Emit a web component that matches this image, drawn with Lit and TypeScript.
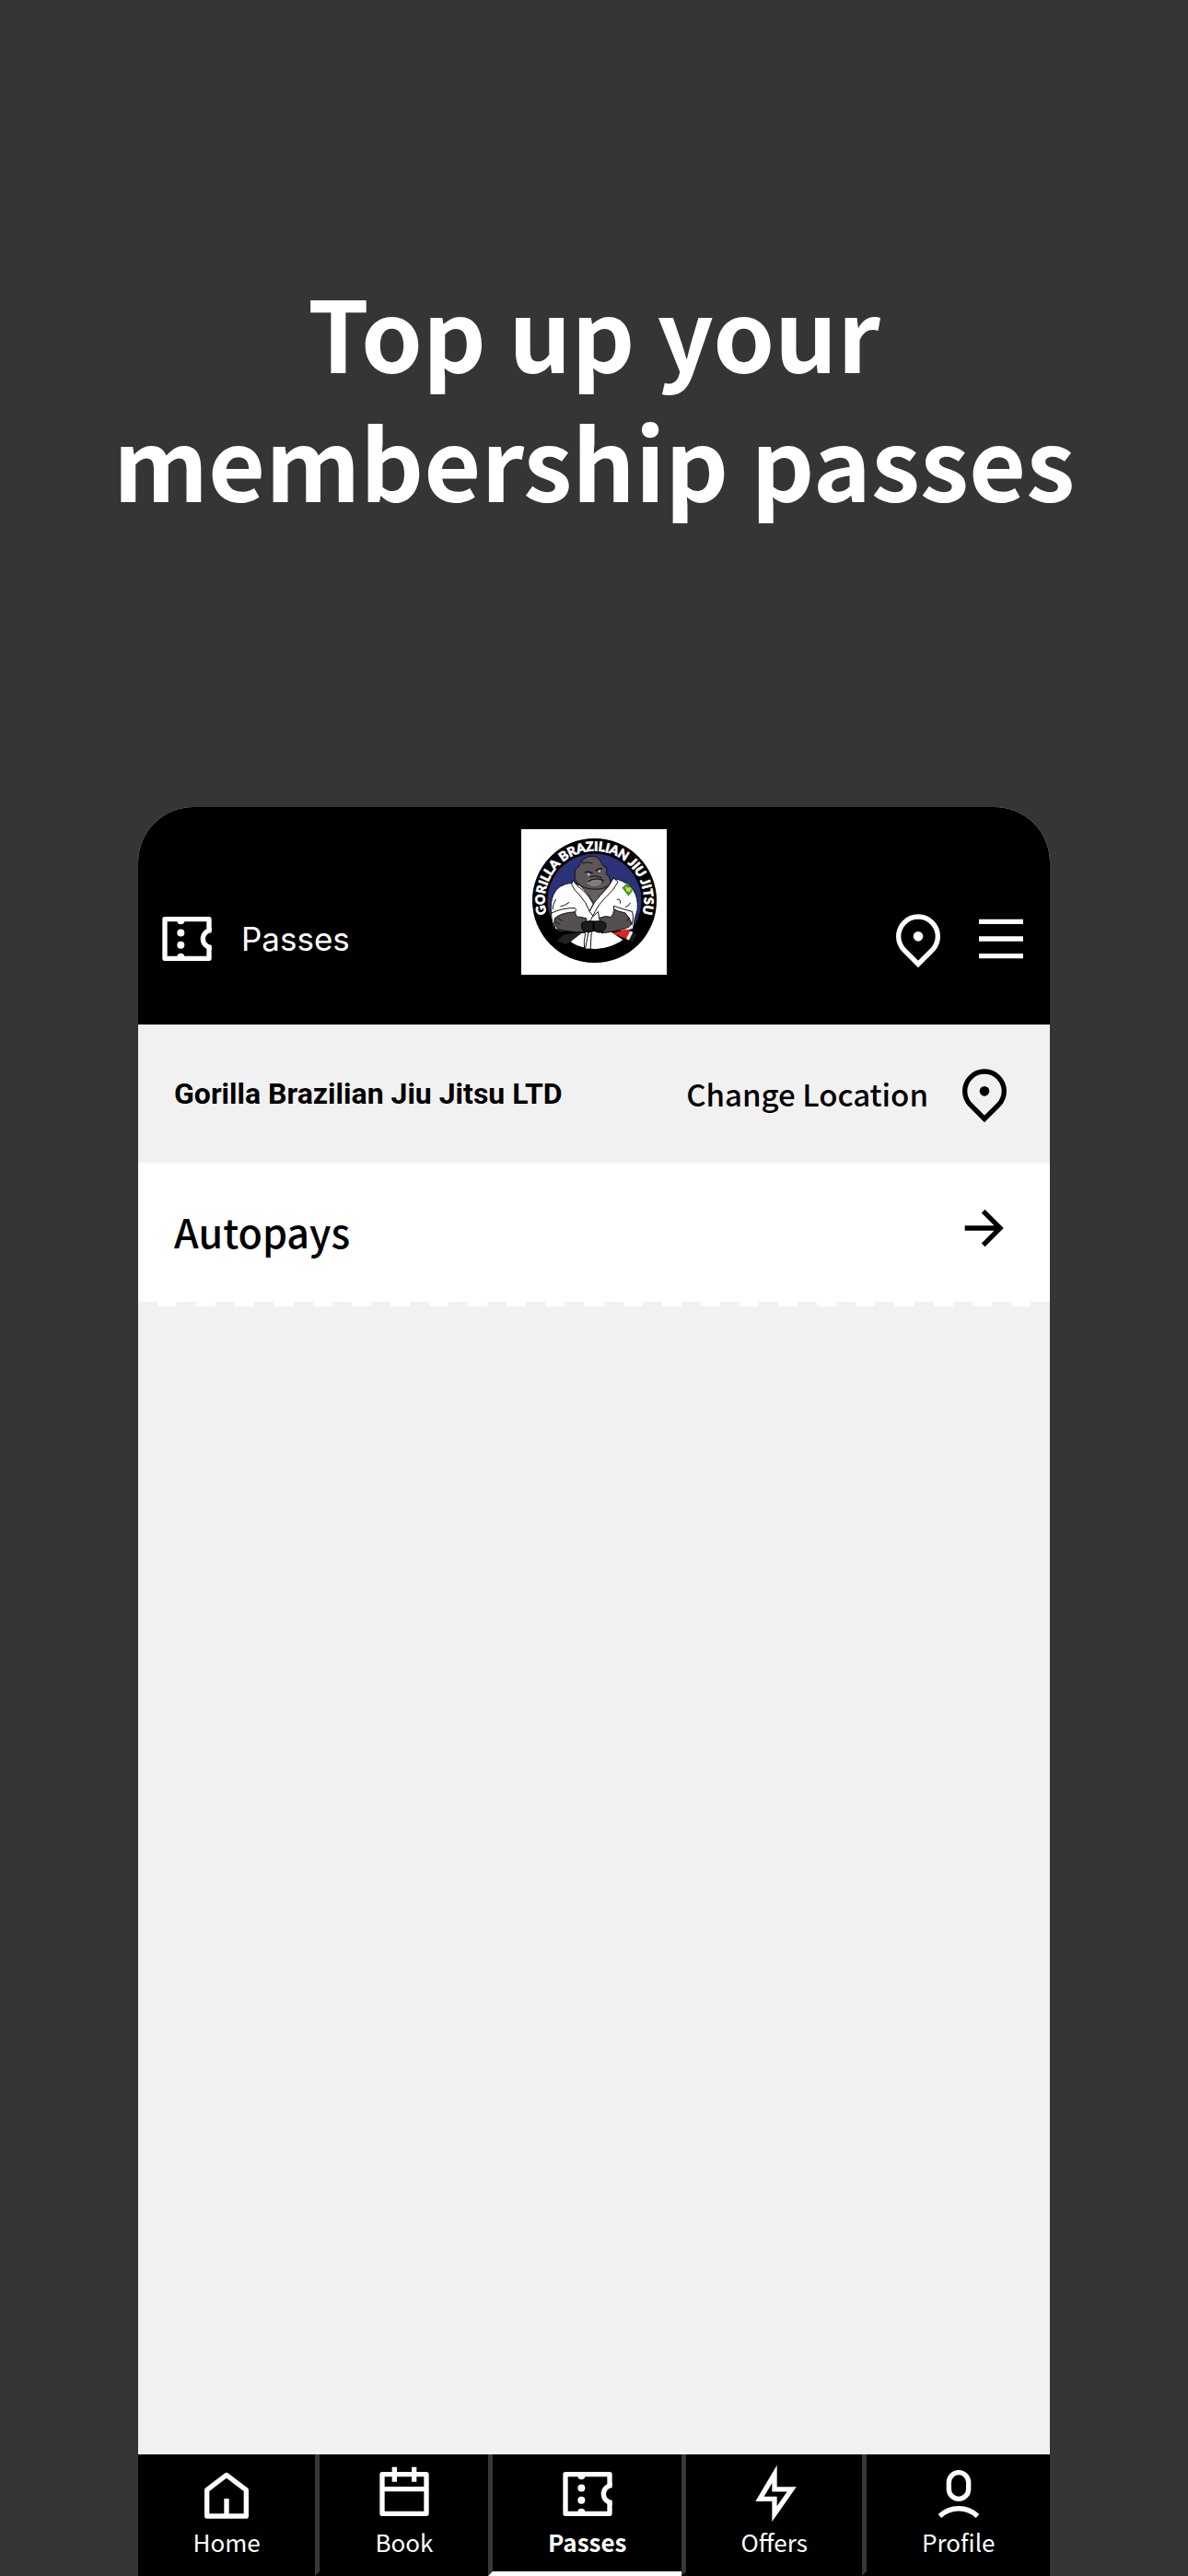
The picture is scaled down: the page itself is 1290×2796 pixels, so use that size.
import { LitElement, html, css, svg } from "lit";
import { customElement, property } from "lit/decorators.js";
import { classMap } from "lit/directives/class-map.js";

const icons = {
  ticket: svg`
    <path d="M21 8.65V4H3v16h18v-4.65" />
    <path d="M22 8.5a3.5 3.5 0 0 0 0 7" />
    <g fill="currentColor" stroke="none">
      <circle cx="9.5" cy="4.6" r="1.5" /><circle cx="9.5" cy="9.6" r="1.5" />
      <circle cx="9.5" cy="14.5" r="1.5" /><circle cx="9.5" cy="19.4" r="1.5" />
    </g>`,
  pin: svg`
    <path stroke-linejoin="miter" d="M6.34 16.66a8 8 0 1 1 11.32 0L12 22.3z" />
    <circle cx="12" cy="11" r="2" fill="currentColor" stroke="none" />`,
  menu: svg`<path d="M3 5h18M3 12h18M3 19h18" />`,
  arrow: svg`<path stroke-linejoin="miter" d="M4 12h14.4M11.5 5.1l6.9 6.9-6.9 6.9" />`,
  house: svg`<path d="M12 4.3L4 10.4V21h16V10.4zM12 13.9V21" />`,
  calendar: svg`<path d="M3 4h18v16H3zM3 10h18M8 1v6M16 1v6" />`,
  bolt: svg`<path stroke-linejoin="miter" stroke-miterlimit="10" d="M12 3.9v6.2h7l-7 10V14H6z" />`,
  person: svg`
    <rect x="8" y="3.25" width="8" height="10.75" rx="4" />
    <path d="M4.3 21a11.1 11.1 0 0 1 15.4 0" />`,
};

type IconName = keyof typeof icons;

@customElement("line-icon")
class LineIcon extends LitElement {
  static styles = css`
    :host {
      display: block;
      flex: none;
    }
    .glyph {
      display: block;
      width: 64px;
      height: 64px;
      fill: none;
      stroke: currentColor;
      stroke-width: 2;
      stroke-linejoin: round;
    }
  `;

  @property() name: IconName = "ticket";

  render() {
    return html`<svg class="glyph" viewBox="0 0 24 24" aria-hidden="true">${icons[this.name]}</svg>`;
  }
}

@customElement("club-logo")
class ClubLogo extends LitElement {
  static styles = css`
    :host {
      display: block;
    }
    .badge {
      display: block;
      width: 158px;
      height: 158px;
      background: #fff;
    }
    .ring-text {
      font: 900 42px Lato, sans-serif;
      fill: #fff;
      stroke: #fff;
      stroke-width: 2;
      text-anchor: middle;
    }
  `;

  render() {
    return html`
      <svg class="badge" viewBox="49 61 475 475" role="img" aria-label="Gorilla Brazilian Jiu Jitsu">
        <defs>
          <path id="ring" d="M288 456A162 162 0 1 1 288.1 456" />
          <clipPath id="disc"><circle cx="288" cy="294" r="158" /></clipPath>
        </defs>
        <circle cx="288" cy="294" r="203" fill="#000" />
        <circle cx="288" cy="294" r="153" fill="#2b3279" />
        <g clip-path="url(#disc)">
          <path fill="#000" d="M130 395H460V460H130z" />
          <path fill="#fff" d="M205 425L250 395H340L385 425Q335 452 292 452Q240 452 205 425z" />
        </g>
        <g stroke="#111" stroke-width="3" stroke-linejoin="round" stroke-linecap="round">
          <path fill="#fff" d="M216 236Q168 240 154 275Q143 300 147 335Q147 365 158 386Q185 395 250 392L330 392Q390 396 414 386Q416 360 428 325Q432 285 414 258Q395 234 362 224L345 235Q300 262 236 243z" />
          <path fill="#655f60" d="M236 240Q262 262 287 305Q318 262 338 238L290 226z" />
          <path fill="#5c5657" d="M246 166Q262 147 284 149Q304 151 313 176Q318 186 328 187Q330 198 326 206Q343 222 340 238Q322 258 290 257Q248 256 234 238Q222 226 224 204Q224 190 237 184Q238 174 246 166z" />
          <path fill="#fff" d="M218 229Q232 248 252 262Q270 278 284 305L272 329Q262 300 238 274Q222 262 214 242z" />
          <path fill="#fff" d="M350 221Q357 225 365 233Q350 262 322 286Q300 308 290 330L276 357L258 452H275L278 400L305 360L300 330L284 345L272 330Q284 300 308 276Q335 252 350 221z" />
          <path fill="#554f50" d="M162 350Q190 330 226 326Q222 350 244 348L262 352L262 368Q245 372 248 388L258 400Q205 395 172 388Q152 374 162 350z" />
          <path fill="#554f50" d="M352 318Q366 328 392 330Q412 345 408 372Q398 386 370 390Q340 398 310 400L322 384Q330 368 310 366L306 350Q325 342 340 348Q352 340 352 318z" />
          <path fill="#fff" d="M147 335Q180 318 224 318Q232 324 224 331Q180 333 158 352Q154 372 160 386Q147 364 147 335z" />
          <path fill="#fff" d="M352 312Q380 322 412 330Q418 348 410 372Q404 350 388 334Q364 330 352 322z" />
          <path fill="none" d="M248 172Q265 165 280 172M274 218Q290 208 312 220M268 236Q290 250 318 232M162 290Q150 310 152 322M205 300Q190 312 178 313M362 290Q375 288 372 302M390 315Q400 312 405 302M165 365l10 6M170 352l12 8M402 350l-8 10M258 403Q252 430 255 450" />
        </g>
        <path fill="#827b7c" d="M264 226Q284 214 306 224Q322 234 300 246Q276 250 264 238z" />
        <path fill="none" stroke="#111" stroke-width="4" d="M256 202Q270 196 282 205M292 197Q300 188 314 189M266 232Q288 216 318 228" />
        <g fill="#ddd"><circle cx="269" cy="209" r="3.5" /><circle cx="304" cy="198" r="3.5" /></g>
        <path fill="#1c1c1c" stroke="#000" stroke-width="3" d="M246 368Q262 358 286 362Q310 358 325 368Q328 386 314 396Q300 402 286 392Q268 402 254 394Q244 384 246 368z" />
        <path fill="#000" d="M282 360h6v34h-6z" />
        <path fill="#222" stroke="#000" stroke-width="2" d="M188 404L250 396L196 438L165 426z" />
        <path fill="#e2231a" d="M345 400L398 388L408 396L396 420z" />
        <path fill="#fff" d="M404 394L414 397L402 424L392 419z" />
        <path fill="#1a1a1a" d="M414 397L427 404L412 430L400 424z" />
        <path fill="#2f9e35" d="M378 252L396 236L413 262L399 280z" />
        <path fill="#f2d21f" d="M388 248L398 252L408 250L404 266L393 264z" />
        <text class="ring-text"><textPath href="#ring" startOffset="50%">GORILLA BRAZILIAN JIU JITSU</textPath></text>
      </svg>
    `;
  }
}

interface Tab {
  label: string;
  icon: IconName;
  active?: boolean;
}

@customElement("app-root")
class AppRoot extends LitElement {
  static styles = css`
    :host {
      display: block;
      font-family: "Noto Sans CJK JP", "Noto Sans", sans-serif;
      color: #000;
    }
    .page {
      display: flex;
      flex-direction: column;
      min-height: 100vh;
      background: #353535;
    }
    .headline {
      margin: 0;
      padding: 289px 100px 307px;
      font-size: 107px;
      line-height: 140px;
      font-weight: 700;
      color: #fff;
      text-align: center;
    }
    .phone {
      flex: 1;
      display: flex;
      flex-direction: column;
      margin: 0 150px;
      background: #f1f1f1;
      border-radius: 60px 60px 0 0;
      overflow: hidden;
    }
    .topbar {
      display: grid;
      grid-template-columns: 1fr auto 1fr;
      align-items: start;
      padding: 24px 21px 54px;
      background: #000;
      color: #fff;
    }
    .section,
    .actions {
      display: flex;
      align-items: center;
      padding-top: 87px;
    }
    .section {
      gap: 27px;
    }
    .actions {
      justify-content: flex-end;
      gap: 26px;
    }
    .section-name {
      margin: 0;
      font: 400 35px/64px Inter, sans-serif;
    }
    .plain {
      display: flex;
      align-items: center;
      margin: 0;
      padding: 0;
      border: 0;
      background: none;
      color: inherit;
      font: inherit;
      cursor: pointer;
    }
    .location {
      display: flex;
      align-items: center;
      justify-content: space-between;
      padding: 43px 39px;
    }
    .club {
      font: 700 32px/64px "Liberation Sans Narrow", Roboto, sans-serif;
    }
    .change {
      gap: 29px;
      font-size: 33px;
      line-height: 64px;
      font-weight: 500;
    }
    .row {
      display: flex;
      align-items: flex-start;
      justify-content: space-between;
      padding: 39px 39px 40px;
      background: #fff;
      color: inherit;
      font-size: 43px;
      line-height: 70px;
      font-weight: 500;
      text-decoration: none;
    }
    .perforation {
      height: 5px;
      background: repeating-linear-gradient(
        90deg,
        #f1f1f1 0 calc(100% / 47),
        #fff calc(100% / 47) calc(200% / 47)
      );
    }
    .row {
      min-height: 72px;
    }
    .tabs {
      display: flex;
      margin-top: auto;
      background: #000;
    }
    .tab {
      flex: 1 1 auto;
      display: flex;
      flex-direction: column;
      align-items: center;
      gap: 3px;
      padding: 11px 0 15px;
      border-bottom: 5px solid #000;
      color: #fff;
      font-size: 26px;
      line-height: 34px;
      font-weight: 400;
      text-decoration: none;
    }
    .tab + .tab {
      border-left: 5px solid #373737;
    }
    .tab.active {
      border-bottom-color: #fff;
      font-weight: 700;
    }
  `;

  private tabs: Tab[] = [
    { label: "Home", icon: "house" },
    { label: "Book", icon: "calendar" },
    { label: "Passes", icon: "ticket", active: true },
    { label: "Offers", icon: "bolt" },
    { label: "Profile", icon: "person" },
  ];

  render() {
    return html`
      <div class="page">
        <h1 class="headline">Top up your membership passes</h1>
        <main class="phone">
          <header class="topbar">
            <div class="section">
              <line-icon name="ticket"></line-icon>
              <h2 class="section-name">Passes</h2>
            </div>
            <club-logo></club-logo>
            <div class="actions">
              <button class="plain" aria-label="Location"><line-icon name="pin"></line-icon></button>
              <button class="plain" aria-label="Menu"><line-icon name="menu"></line-icon></button>
            </div>
          </header>
          <div class="location">
            <span class="club">Gorilla Brazilian Jiu Jitsu LTD</span>
            <button class="plain change">Change Location <line-icon name="pin"></line-icon></button>
          </div>
          <a class="row" href="#autopays">Autopays <line-icon name="arrow"></line-icon></a>
          <div class="perforation"></div>
          <nav class="tabs">
            ${this.tabs.map(
              (tab) => html`
                <a class=${classMap({ tab: true, active: !!tab.active })} href="#${tab.label.toLowerCase()}">
                  <line-icon name=${tab.icon}></line-icon>
                  <span>${tab.label}</span>
                </a>
              `
            )}
          </nav>
        </main>
      </div>
    `;
  }
}
